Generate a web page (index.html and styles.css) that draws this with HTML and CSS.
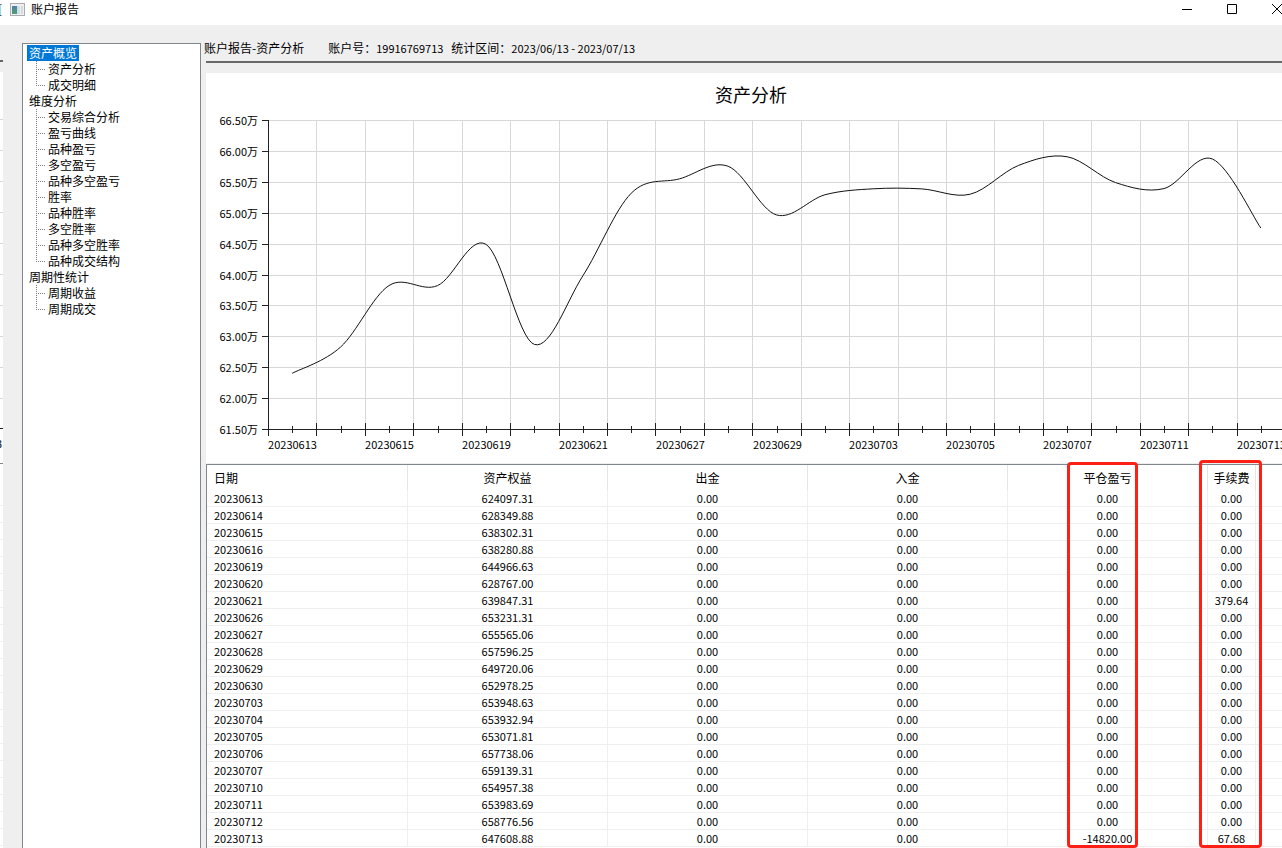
FILE: index.html
```
<!DOCTYPE html>
<html lang="zh-CN">
<head>
  <meta charset="utf-8">
  <title>账户报告</title>
  <link rel="stylesheet" href="styles.css">
</head>
<body>
  <div class="titlebar">
    <span class="edge-title">[</span>
    <svg class="app-icon" width="15" height="13" viewBox="0 0 15 13">
      <defs>
        <linearGradient id="pane" x1="0" y1="0" x2="0" y2="1">
          <stop offset="0" stop-color="#4f7fa8"/>
          <stop offset="1" stop-color="#4fa070"/>
        </linearGradient>
      </defs>
      <rect x="0.5" y="0.5" width="14" height="12" fill="#eef0f2" stroke="#a9adb1"/>
      <rect x="2" y="3" width="5" height="8" fill="url(#pane)"/>
      <rect x="7" y="3" width="3" height="8" fill="#cfe0ea"/>
      <rect x="11" y="3" width="2" height="8" fill="#d5dadd"/>
    </svg>
    <h1>账户报告</h1>
    <div class="window-buttons">
      <button aria-label="最小化"><svg width="12" height="12"><path d="M1 6.5h10"/></svg></button>
      <button aria-label="最大化"><svg width="12" height="12"><path d="M1.5 1.5h9v9h-9z"/></svg></button>
      <button aria-label="关闭"><svg width="12" height="12"><path d="M1 1l10 10M11 1L1 11"/></svg></button>
    </div>
  </div>

  <div class="window">
    <div class="edge">
      <div class="edge-head"></div>
      <div class="edge-chart"></div>
      <div class="edge-axis">3</div>
      <div class="edge-table"></div>
    </div>

    <nav class="tree">
      <a href="#" class="selected">资产概览</a>
      <ul>
        <li><a href="#">资产分析</a></li>
        <li><a href="#">成交明细</a></li>
      </ul>
      <a href="#">维度分析</a>
      <ul>
        <li><a href="#">交易综合分析</a></li>
        <li><a href="#">盈亏曲线</a></li>
        <li><a href="#">品种盈亏</a></li>
        <li><a href="#">多空盈亏</a></li>
        <li><a href="#">品种多空盈亏</a></li>
        <li><a href="#">胜率</a></li>
        <li><a href="#">品种胜率</a></li>
        <li><a href="#">多空胜率</a></li>
        <li><a href="#">品种多空胜率</a></li>
        <li><a href="#">品种成交结构</a></li>
      </ul>
      <a href="#">周期性统计</a>
      <ul>
        <li><a href="#">周期收益</a></li>
        <li><a href="#">周期成交</a></li>
      </ul>
    </nav>

    <main>
      <div class="report-head">
        <span class="report-name">账户报告-资产分析</span>
        <span>账户号：</span><span class="num account">19916769713</span>
        <span>统计区间：</span><span class="num">2023/06/13 - 2023/07/13</span>
      </div>

      <div class="chart">
        <h2>资产分析</h2>
        <svg id="chart" height="350"></svg>
      </div>

      <div class="table-wrap">
        <table>
          <colgroup>
            <col class="first"><col class="wide"><col class="wide"><col class="wide"><col class="wide"><col class="fee"><col>
          </colgroup>
          <thead>
            <tr><th>日期</th><th>资产权益</th><th>出金</th><th>入金</th><th>平仓盈亏</th><th>手续费</th><th></th></tr>
          </thead>
          <tbody id="rows"></tbody>
        </table>
        <div class="mark mark-profit"></div>
        <div class="mark mark-fee"></div>
      </div>
    </main>
  </div>

  <script src="script.js"></script>
</body>
</html>
```

FILE: styles.css
```
* {
  box-sizing: border-box;
}

body {
  margin: 0;
  height: 100vh;
  display: flex;
  flex-direction: column;
  overflow: hidden;
  background-color: #efefef;
  color: #000;
  font-family: "Noto Sans CJK SC", sans-serif;
  font-size: 12px;
  line-height: 16px;
}

h1, h2 {
  margin: 0;
  font-weight: normal;
}

a {
  color: inherit;
  text-decoration: none;
}

.num {
  font-size: 11px;
}

/* title bar */
.titlebar {
  display: flex;
  flex: none;
  height: 25px;
  padding-bottom: 7px;
  align-items: center;
  background-color: #fff;
}

.edge-title {
  width: 3px;
  margin-right: 7px;
  overflow: hidden;
  text-indent: -2px;
}

.titlebar h1 {
  margin-left: 6px;
  font-size: 12px;
}

.window-buttons {
  display: flex;
  margin-left: auto;
  margin-right: -17px;
}

.window-buttons button {
  display: flex;
  justify-content: center;
  align-items: center;
  width: 45px;
  height: 18px;
  padding: 0;
  border: none;
  background: none;
}

.window-buttons path {
  fill: none;
  stroke: #000;
}

.window {
  display: flex;
  flex: 1;
  min-height: 0;
}

/* window lying behind, only its right edge shows */
.edge {
  display: flex;
  flex-direction: column;
  flex: none;
  width: 3px;
  margin-right: 19px;
  overflow: hidden;
  background-color: #fff;
}

.edge-head {
  height: 47px;
  background: linear-gradient(#666, #666) 0 35px / 100% 2px no-repeat #efefef;
}

.edge-chart {
  height: 357px;
  background: repeating-linear-gradient(transparent 0 30px, #d8d8d8 30px 31px) 0 17px / 100% 340px no-repeat;
  border-bottom: 1px solid #222;
}

.edge-axis {
  height: 35px;
  padding-top: 6px;
  border-bottom: 1px solid #82878f;
  font-size: 11px;
  text-indent: -4px;
}

.edge-table {
  flex: 1;
  margin-top: 25px;
  background: repeating-linear-gradient(transparent 0 16px, #efefef 16px 17px);
}

/* tree */
.tree {
  flex: none;
  width: 179px;
  margin-top: 18px;
  padding: 1px 4px;
  border: 1px solid #82878f;
  border-bottom: none;
  background-color: #fff;
}

.tree a {
  display: block;
  width: max-content;
  height: 16px;
  padding: 0 2px;
}

.tree .selected {
  background-color: #0078d7;
  color: #fff;
}

.tree ul {
  margin: 0;
  padding: 0 0 0 9px;
  list-style: none;
}

.tree li {
  padding-left: 10px;
  background:
    repeating-linear-gradient(#808080 0 1px, transparent 1px 2px) 0 0 / 1px 100% no-repeat,
    repeating-linear-gradient(90deg, #808080 0 1px, transparent 1px 2px) 0 8px / 9px 1px no-repeat;
}

.tree li:last-child {
  background-size: 1px 9px, 9px 1px;
}

/* report */
main {
  display: flex;
  flex-direction: column;
  flex: 1;
  min-width: 0;
  padding-left: 3px;
}

.report-head {
  display: flex;
  align-items: center;
  height: 38px;
  padding-top: 9px;
  border-bottom: 2px solid #696969;
  margin-left: 2px;
  white-space: nowrap;
}

.report-name {
  margin-left: -2px;
  margin-right: 24px;
}

.account {
  margin-right: 8px;
}

.chart {
  margin: 10px 0 1px 2px;
  height: 390px;
  background-color: #fff;
  overflow: hidden;
}

.chart h2 {
  padding-top: 8px;
  height: 40px;
  font-size: 18px;
  line-height: 26px;
  text-align: center;
  text-indent: 14px;
}

.chart svg {
  display: block;
  width: 100%;
}

.chart text {
  font-size: 11px;
}

.grid {
  stroke: #d8d8d8;
  shape-rendering: crispEdges;
}

.axis {
  stroke: #222;
  shape-rendering: crispEdges;
}

.line {
  fill: none;
  stroke: #111;
}

.table-wrap {
  position: relative;
  flex: 1;
  margin-left: 2px;
  border-top: 1px solid #82878f;
  border-left: 1px solid #82878f;
  background-color: #fff;
}

table {
  width: 100%;
  table-layout: fixed;
  border-collapse: separate;
  border-spacing: 0;
}

.first {
  width: 201px;
}

.wide {
  width: 200px;
}

.fee {
  width: 48px;
}

th, td {
  padding: 0;
  text-align: center;
  white-space: nowrap;
}

th {
  height: 25px;
  border-right: 1px solid #e5e5e5;
  font-weight: normal;
}

td {
  height: 17px;
  border-right: 1px solid #efefef;
  border-bottom: 1px solid #efefef;
  font-size: 11px;
  line-height: 16px;
}

th:first-child, td:first-child {
  padding-left: 7px;
  text-align: left;
}

th:last-child, td:last-child {
  border-right: none;
}

/* red frames over the two columns */
.mark {
  position: absolute;
  bottom: 0;
  border: 3px solid #ff2015;
  border-radius: 4px;
}

.mark-profit {
  top: -3px;
  left: 860px;
  width: 71px;
}

.mark-fee {
  top: -5px;
  left: 992px;
  width: 63px;
}
```

FILE: script.js
```
var data = [
  ["20230613", 624097.31], ["20230614", 628349.88], ["20230615", 638302.31],
  ["20230616", 638280.88], ["20230619", 644966.63], ["20230620", 628767.00],
  ["20230621", 639847.31, "0.00", "379.64"], ["20230626", 653231.31], ["20230627", 655565.06],
  ["20230628", 657596.25], ["20230629", 649720.06], ["20230630", 652978.25],
  ["20230703", 653948.63], ["20230704", 653932.94], ["20230705", 653071.81],
  ["20230706", 657738.06], ["20230707", 659139.31], ["20230710", 654957.38],
  ["20230711", 653983.69], ["20230712", 658776.56], ["20230713", 647608.88, "-14820.00", "67.68"]
];

function fillTable() {
  var html = "";
  data.forEach(function(d) {
    var cells = [d[0], d[1].toFixed(2), "0.00", "0.00", d[2] || "0.00", d[3] || "0.00", ""];
    html += "<tr><td>" + cells.join("</td><td>") + "</td></tr>";
  });
  document.getElementById("rows").innerHTML = html;
}

// smooth curve through all points, tension 0.5
function curvePath(points) {
  var last = points.length - 1;
  var path = "M" + points[0].join(" ");
  for (var i = 0; i < last; i++) {
    var p0 = points[Math.max(i - 1, 0)];
    var p1 = points[i];
    var p2 = points[i + 1];
    var p3 = points[Math.min(i + 2, last)];
    path += " C" + [
      p1[0] + (p2[0] - p0[0]) / 6, p1[1] + (p2[1] - p0[1]) / 6,
      p2[0] - (p3[0] - p1[0]) / 6, p2[1] - (p3[1] - p1[1]) / 6,
      p2[0], p2[1]
    ].join(" ");
  }
  return path;
}

function drawChart() {
  var svg = document.getElementById("chart");
  var left = 62, top = 7, bottom = 316;
  var right = svg.clientWidth + 3;
  var step = (right - left) / data.length;
  var out = "";
  var i, x, y;

  function line(cls, x1, y1, x2, y2) {
    out += '<line class="' + cls + '" x1="' + x1 + '" y1="' + y1 + '" x2="' + x2 + '" y2="' + y2 + '"/>';
  }

  for (i = 0; i <= 10; i++) {
    y = Math.round(top + (bottom - top) * i / 10) + 0.5;
    line("grid", left, y, right, y);
    line("axis", left - 6, y, left, y);
    out += '<text x="52" y="' + (y + 4) + '" text-anchor="end">' + (66.5 - i * 0.5).toFixed(2) + '万</text>';
  }

  for (i = 0; i <= data.length; i++) {
    x = Math.round(left + step * i) + 0.5;
    if (i > 0) {
      line("grid", x, top, x, bottom);
      line("axis", x, bottom - 6, x, bottom + 7);
    }
    if (i < data.length) {
      x = Math.round(left + step * (i + 0.5)) + 0.5;
      line("axis", x, bottom - 3, x, bottom + 4);
      if (i % 2 == 0) {
        out += '<text x="' + x + '" y="' + (bottom + 20) + '" text-anchor="middle">' + data[i][0] + '</text>';
      }
    }
  }
  line("axis", left + 0.5, top, left + 0.5, bottom + 7);
  line("axis", left, bottom + 0.5, right, bottom + 0.5);

  var points = data.map(function(d, n) {
    return [left + step * (n + 0.5), top + (665000 - d[1]) / 50000 * (bottom - top) + 0.5];
  });
  out += '<path class="line" d="' + curvePath(points) + '"/>';
  svg.innerHTML = out;
}

fillTable();
drawChart();
window.addEventListener("resize", drawChart);
```
